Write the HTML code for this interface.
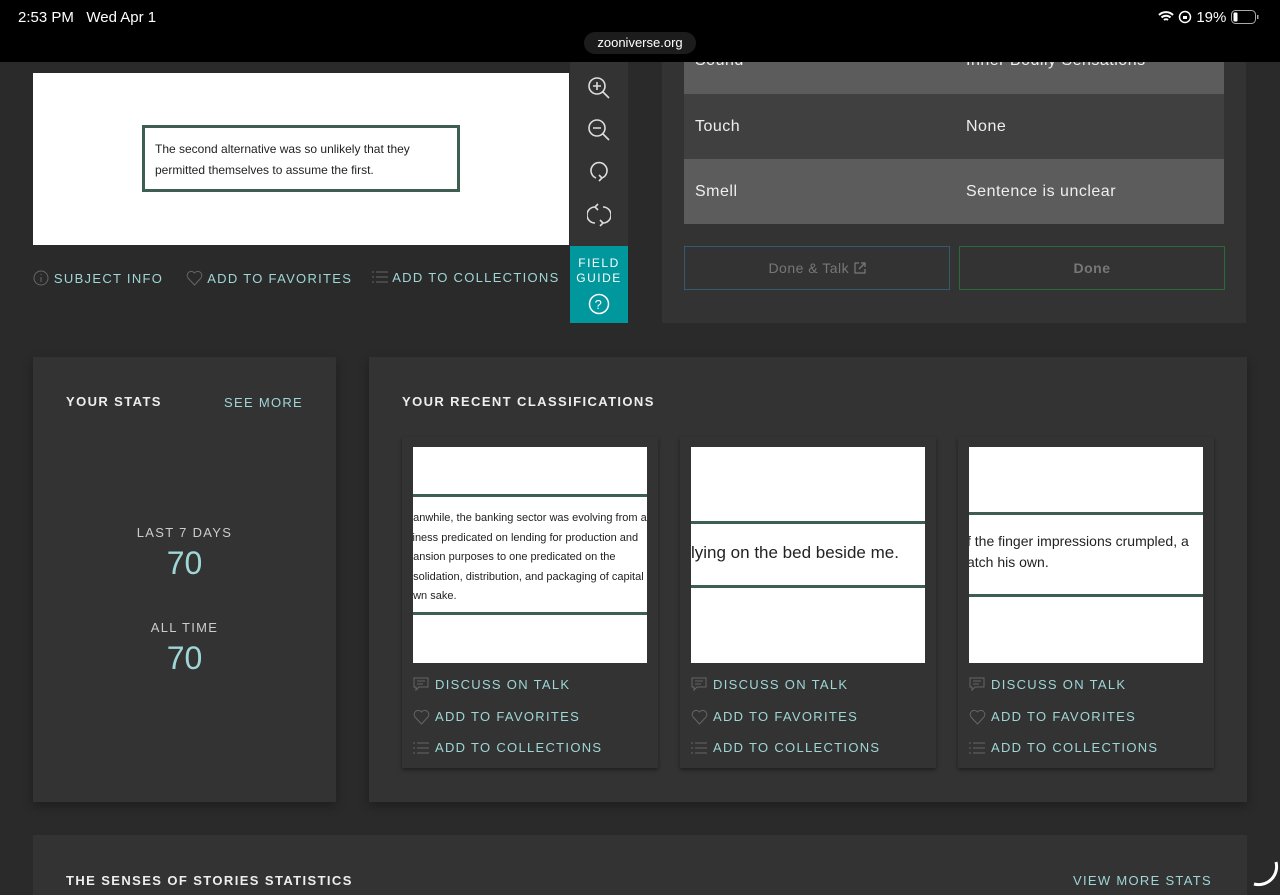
<!DOCTYPE html>
<html><head><meta charset="utf-8"><style>
*{margin:0;padding:0;box-sizing:border-box}
body{width:1280px;height:889px;overflow:hidden;background:#2a2a2a;font-family:"Liberation Sans",sans-serif;position:relative;color:#ddd}
.a{position:absolute}
.top{left:0;top:0;width:1280px;height:62px;background:#000}
.cap{letter-spacing:1.3px;font-size:13px;text-transform:uppercase;white-space:nowrap}
.hd{letter-spacing:1.4px;font-size:13px;font-weight:bold;color:#eee;white-space:nowrap}
.teal{color:#9fd6d6}
.row{position:absolute;left:684px;width:540px;font-size:16px;color:#eee;letter-spacing:.5px}
.row span{position:absolute;left:11px}
.row b{font-weight:normal;position:absolute;left:282px}
.card{position:absolute;top:437px;width:256px;height:331px;background:#333;box-shadow:0 2px 4px rgba(0,0,0,.4)}
.card .img{position:absolute;left:11px;top:10px;width:234px;height:216px;background:#fff;overflow:hidden}
.card .l{position:absolute;left:33px;font-size:13px;letter-spacing:1.3px;color:#9fd6d6;white-space:nowrap}
.card svg{position:absolute;left:11px}
.ln{position:absolute;left:0;width:234px;height:3px;background:#3e5e52}
</style></head><body>
<div class="a" style="left:585px;top:48px;width:28px;height:16px;border-radius:0 0 14px 14px;background:#00979d"></div>
<div class="a top"></div>
<div class="a" style="left:18px;top:9px;color:#fff;font-size:15px">2:53 PM&nbsp;&nbsp;&nbsp;Wed Apr 1</div>
<div class="a" style="left:584px;top:32px;width:112px;height:22px;border-radius:11px;background:#1c1c1c;color:#fff;font-size:13px;text-align:center;line-height:22px">zooniverse.org</div>
<div class="a" style="left:1158px;top:9px;color:#fff;font-size:15px">
<svg width="16" height="12" viewBox="0 0 16 12" style="vertical-align:-1px"><path d="M1 4a10 10 0 0 1 14 0M3.5 6.5a6.5 6.5 0 0 1 9 0M6 9a3 3 0 0 1 4 0" stroke="#fff" stroke-width="2" fill="none"/></svg>
<svg width="14" height="14" viewBox="0 0 14 14" style="vertical-align:-2px"><circle cx="7" cy="7" r="5.5" stroke="#fff" stroke-width="1.5" fill="none"/><rect x="5" y="6" width="4" height="3" fill="#fff"/></svg> 19% <svg width="28" height="14" viewBox="0 0 28 14" style="vertical-align:-2px"><rect x=".5" y=".5" width="24" height="13" rx="4" stroke="#aaa" fill="none"/><rect x="2.5" y="2.5" width="4" height="9" rx="1" fill="#fff"/><rect x="26" y="5" width="1.5" height="4" fill="#aaa"/></svg></div>

<div class="a" style="left:33px;top:73px;width:536px;height:172px;background:#fff"></div>
<div class="a" style="left:142px;top:125px;width:318px;height:67px;border:3px solid #3e5e52;font-size:12px;color:#222;padding:11px 0 0 10px;line-height:21px">The second alternative was so unlikely that they<br>permitted themselves to assume the first.</div>
<div class="a" style="left:570px;top:62px;width:58px;height:184px;background:#333"></div>
<svg class="a" style="left:586px;top:75px" width="26" height="26" viewBox="0 0 26 26" fill="none" stroke="#ddd" stroke-width="1.6"><circle cx="11" cy="11" r="8"/><path d="M17 17l6 6M11 7v8M7 11h8"/></svg>
<svg class="a" style="left:586px;top:117px" width="26" height="26" viewBox="0 0 26 26" fill="none" stroke="#ddd" stroke-width="1.6"><circle cx="11" cy="11" r="8"/><path d="M17 17l6 6M7 11h8"/></svg>
<svg class="a" style="left:587px;top:158px" width="24" height="26" viewBox="0 0 24 26" fill="none" stroke="#ddd" stroke-width="1.6"><path d="M9 20A8 8 0 1 1 15 20M12 17l3 3-3 3"/></svg>
<svg class="a" style="left:587px;top:202px" width="24" height="26" viewBox="0 0 24 26" fill="none" stroke="#ddd" stroke-width="1.6"><path d="M8 5A8 8 0 0 0 8 21M16 5A8 8 0 0 1 16 21M11 2l-3 3 3 3M13 18l3 3-3 3"/></svg>
<div class="a" style="left:570px;top:246px;width:58px;height:77px;background:#00979d;color:#fff;text-align:center;font-size:12px;letter-spacing:1.5px;line-height:15px;padding-top:10px">FIELD<br>GUIDE
<svg style="display:block;margin:7px auto 0" width="22" height="22" viewBox="0 0 22 22"><circle cx="11" cy="11" r="9.5" stroke="#fff" stroke-width="1.5" fill="none"/><text x="11" y="16" font-size="13" fill="#fff" text-anchor="middle" font-family="Liberation Sans">?</text></svg></div>
<div class="a cap teal" style="left:33px;top:270px">
<svg width="16" height="16" viewBox="0 0 16 16" style="vertical-align:-3px"><circle cx="8" cy="8" r="7" stroke="#666" fill="none"/><path d="M8 7v5M8 4v1" stroke="#666"/></svg> SUBJECT INFO</div>
<div class="a cap teal" style="left:186px;top:270px"><svg width="17" height="16" viewBox="0 0 17 16" style="vertical-align:-3px"><path d="M8.5 15L2 8A3.7 3.7 0 0 1 8.5 3 3.7 3.7 0 0 1 15 8z" stroke="#666" fill="none"/></svg> ADD TO FAVORITES</div>
<div class="a cap teal" style="left:372px;top:270px"><svg width="16" height="12" viewBox="0 0 16 12" style="vertical-align:-1px" stroke="#666"><path d="M0 1h2M4 1h12M0 6h2M4 6h12M0 11h2M4 11h12"/></svg> ADD TO COLLECTIONS</div>

<div class="a" style="left:662px;top:62px;width:584px;height:261px;background:#333"></div>
<div class="row" style="top:62px;height:32px;background:#5c5c5c;overflow:hidden"><span style="top:-10px">Sound</span><b style="top:-10px">Inner Bodily Sensations</b></div>
<div class="row" style="top:94px;height:65px;background:#404040"><span style="top:24px">Touch</span><b style="top:24px">None</b></div>
<div class="row" style="top:159px;height:65px;background:#5c5c5c"><span style="top:24px">Smell</span><b style="top:24px">Sentence is unclear</b></div>
<div class="a" style="left:684px;top:246px;width:266px;height:44px;border:1px solid #35596e;color:#777;font-size:14px;text-align:center;line-height:42px;letter-spacing:.5px">Done &amp; Talk <svg width="12" height="12" viewBox="0 0 12 12" fill="none" stroke="#777" stroke-width="1.3" style="vertical-align:-1px"><path d="M5 1H1v10h10V7M7 1h4v4M11 1L5 7"/></svg></div>
<div class="a" style="left:959px;top:246px;width:266px;height:44px;border:1px solid #2c6a3c;color:#777;font-size:14px;text-align:center;line-height:42px;font-weight:bold;letter-spacing:.5px">Done</div>

<div class="a" style="left:33px;top:357px;width:303px;height:445px;background:#333;box-shadow:0 4px 10px rgba(0,0,0,.3)"></div>
<div class="a hd" style="left:66px;top:394px">YOUR STATS</div>
<div class="a cap teal" style="left:224px;top:395px">SEE MORE</div>
<div class="a cap" style="left:33px;width:303px;text-align:center;top:525px;color:#ccc">LAST 7 DAYS</div>
<div class="a teal" style="left:33px;width:303px;text-align:center;top:545px;font-size:32px">70</div>
<div class="a cap" style="left:33px;width:303px;text-align:center;top:620px;color:#ccc">ALL TIME</div>
<div class="a teal" style="left:33px;width:303px;text-align:center;top:640px;font-size:32px">70</div>

<div class="a" style="left:369px;top:357px;width:878px;height:445px;background:#333;box-shadow:0 4px 10px rgba(0,0,0,.3)"></div>
<div class="a hd" style="left:402px;top:394px">YOUR RECENT CLASSIFICATIONS</div>

<div class="card" style="left:402px"><div class="img">
<div class="ln" style="top:47px"></div><div class="ln" style="top:165px"></div>
<div style="position:absolute;left:-6px;top:62px;font-size:11px;color:#222;line-height:19.5px;white-space:nowrap">eanwhile, the banking sector was evolving from a<br>siness predicated on lending for production and<br>pansion purposes to one predicated on the<br>nsolidation, distribution, and packaging of capital<br>own sake.</div></div></div>
<div class="card" style="left:680px"><div class="img">
<div class="ln" style="top:74px"></div><div class="ln" style="top:138px"></div>
<div style="position:absolute;left:0;top:96px;font-size:17px;color:#222;white-space:nowrap">lying on the bed beside me.</div></div></div>
<div class="card" style="left:958px"><div class="img">
<div class="ln" style="top:65px"></div><div class="ln" style="top:147px"></div>
<div style="position:absolute;left:-2px;top:84px;font-size:14px;color:#222;white-space:nowrap;line-height:21px">f the finger impressions crumpled, a<br>atch his own.</div></div></div>

<div class="a" style="left:33px;top:835px;width:1214px;height:60px;background:#333"></div>
<div class="a hd" style="left:66px;top:873px">THE SENSES OF STORIES STATISTICS</div>
<div class="a cap teal" style="left:1073px;top:873px">VIEW MORE STATS</div>
<svg class="a" style="left:1250px;top:858px" width="30" height="30" viewBox="0 0 30 30"><path d="M4 26A18 18 0 0 0 26 4" stroke="#fff" stroke-width="3" fill="none"/></svg>

<script>
var h='<svg style="top:240px" width="16" height="15" viewBox="0 0 16 15" fill="none" stroke="#666"><path d="M1 1h14v9H6l-3 3v-3H1z M4 4h8M4 7h6"/></svg><div class="l" style="top:240px">DISCUSS ON TALK</div>'+
'<svg style="top:272px" width="17" height="16" viewBox="0 0 17 16" fill="none" stroke="#666"><path d="M8.5 15L2 8A3.7 3.7 0 0 1 8.5 3 3.7 3.7 0 0 1 15 8z"/></svg><div class="l" style="top:272px">ADD TO FAVORITES</div>'+
'<svg style="top:305px" width="16" height="12" viewBox="0 0 16 12" stroke="#666"><path d="M0 1h2M4 1h12M0 6h2M4 6h12M0 11h2M4 11h12"/></svg><div class="l" style="top:303px">ADD TO COLLECTIONS</div>';
document.querySelectorAll('.card').forEach(function(c){c.insertAdjacentHTML('beforeend',h)});
</script>
</body></html>
